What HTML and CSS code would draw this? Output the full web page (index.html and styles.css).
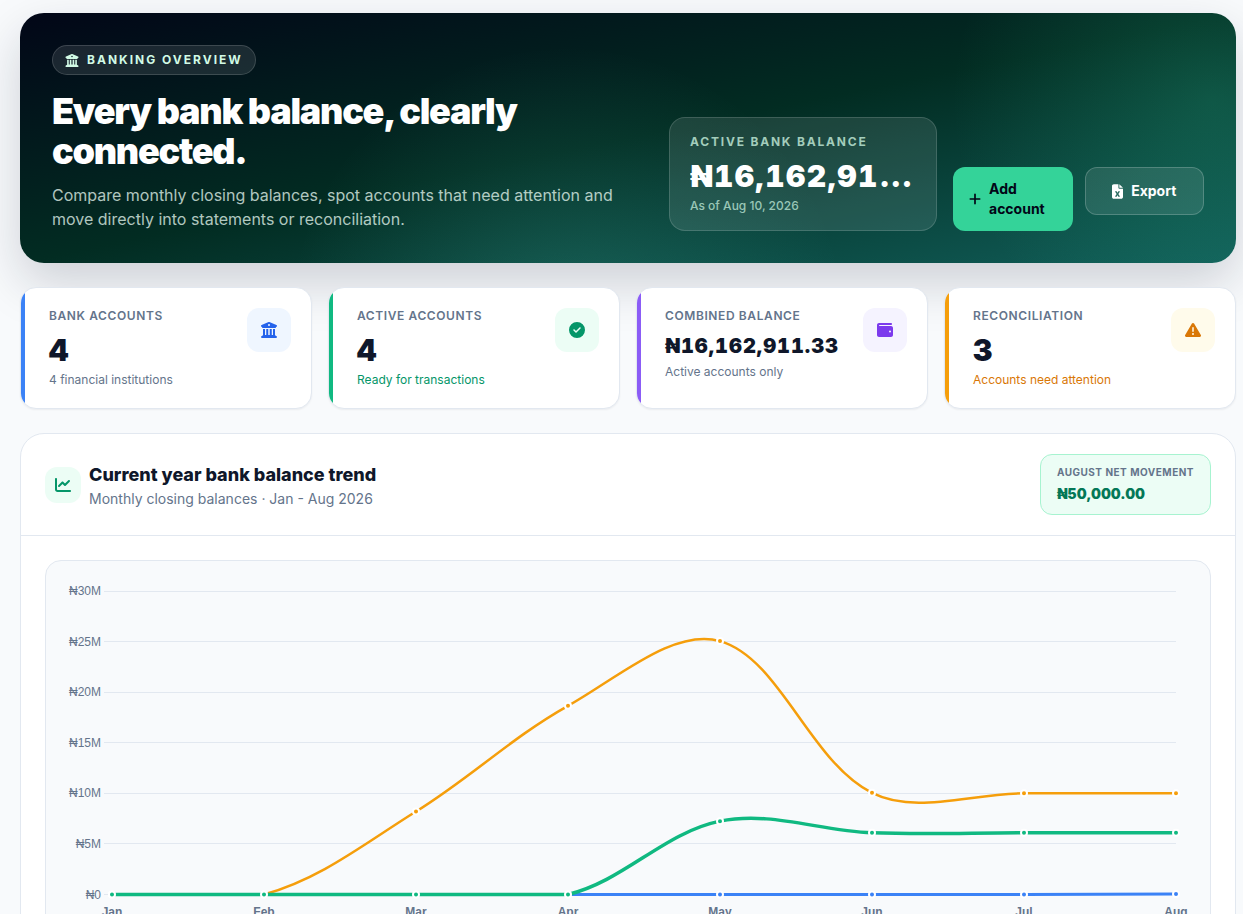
FILE: index.html
```html
<!DOCTYPE html>
<html lang="en">
<head>
    <meta charset="UTF-8">
    <meta name="viewport" content="width=device-width, initial-scale=1.0">
    <title>Banking overview</title>
    <link rel="stylesheet" href="styles.css">
</head>
<body>
    <!-- shared icons -->
    <svg class="sprite" aria-hidden="true">
        <symbol id="i-bank" viewBox="0 0 512 512"><path d="M243.4 2.6l-224 96c-14 6-21.8 21-18.7 35.8S16.8 160 32 160v8c0 13.3 10.7 24 24 24H456c13.3 0 24-10.7 24-24v-8c15.2 0 28.3-10.7 31.3-25.6s-4.8-29.9-18.7-35.8l-224-96c-8-3.4-17.2-3.4-25.2 0zM128 224H64V420.3c-.6 .3-1.2 .7-1.8 1.1l-48 32c-11.7 7.8-17 22.4-12.9 35.9S17.9 512 32 512H480c14.1 0 26.5-9.2 30.6-22.7s-1.1-28.1-12.9-35.9l-48-32c-.6-.4-1.2-.7-1.8-1.1V224H384V416H344V224H280V416H232V224H168V416H128V224zM256 64a32 32 0 1 1 0 64 32 32 0 1 1 0-64z"/></symbol>
        <symbol id="i-check" viewBox="0 0 512 512"><path d="M256 512A256 256 0 1 0 256 0a256 256 0 1 0 0 512zM369 209L241 337c-9.4 9.4-24.6 9.4-33.9 0l-64-64c-9.4-9.4-9.4-24.6 0-33.9s24.6-9.4 33.9 0l47 47L335 175c9.4-9.4 24.6-9.4 33.9 0s9.4 24.6 0 33.9z"/></symbol>
        <symbol id="i-wallet" viewBox="0 0 512 512"><path d="M64 32C28.7 32 0 60.7 0 96V416c0 35.3 28.7 64 64 64H448c35.3 0 64-28.7 64-64V192c0-35.3-28.7-64-64-64H80c-8.8 0-16-7.2-16-16s7.2-16 16-16H448c17.7 0 32-14.3 32-32s-14.3-32-32-32H64zM416 272a32 32 0 1 1 0 64 32 32 0 1 1 0-64z"/></symbol>
        <symbol id="i-warning" viewBox="0 0 512 512"><path d="M256 32c14.2 0 27.3 7.5 34.5 19.8l216 368c7.3 12.4 7.3 27.7 .2 40.1S486.3 480 472 480H40c-14.3 0-27.6-7.7-34.7-20.1s-7-27.8 .2-40.1l216-368C228.7 39.5 241.8 32 256 32zm0 128c-13.3 0-24 10.7-24 24V296c0 13.3 10.7 24 24 24s24-10.7 24-24V184c0-13.3-10.7-24-24-24zm32 224a32 32 0 1 0 -64 0 32 32 0 1 0 64 0z"/></symbol>
        <symbol id="i-chart" viewBox="0 0 512 512"><path d="M64 64c0-17.7-14.3-32-32-32S0 46.3 0 64V400c0 44.2 35.8 80 80 80H480c17.7 0 32-14.3 32-32s-14.3-32-32-32H80c-8.8 0-16-7.2-16-16V64zm406.6 86.6c12.5-12.5 12.5-32.8 0-45.3s-32.8-12.5-45.3 0L320 210.7l-57.4-57.4c-12.5-12.5-32.8-12.5-45.3 0l-112 112c-12.5 12.5-12.5 32.8 0 45.3s32.8 12.5 45.3 0L240 221.3l57.4 57.4c12.5 12.5 32.8 12.5 45.3 0l128-128z"/></symbol>
        <symbol id="i-plus" viewBox="0 0 448 512"><path d="M256 80c0-17.7-14.3-32-32-32s-32 14.3-32 32V224H48c-17.7 0-32 14.3-32 32s14.3 32 32 32H192V432c0 17.7 14.3 32 32 32s32-14.3 32-32V288H400c17.7 0 32-14.3 32-32s-14.3-32-32-32H256V80z"/></symbol>
        <symbol id="i-excel" viewBox="0 0 384 512"><path d="M64 0C28.7 0 0 28.7 0 64V448c0 35.3 28.7 64 64 64H320c35.3 0 64-28.7 64-64V160H256c-17.7 0-32-14.3-32-32V0H64zM256 0V128H384L256 0zM155.7 250.2L192 302.1l36.3-51.9c7.6-10.9 22.6-13.5 33.4-5.9s13.5 22.6 5.9 33.4L221.3 344l46.4 66.2c7.6 10.9 5 25.8-5.9 33.4s-25.8 5-33.4-5.9L192 385.8l-36.3 51.9c-7.6 10.9-22.6 13.5-33.4 5.9s-13.5-22.6-5.9-33.4L162.7 344l-46.4-66.2c-7.6-10.9-5-25.8 5.9-33.4s25.8-5 33.4 5.9z"/></symbol>
    </svg>

    <main class="page">
        <section class="hero">
            <div class="hero-text">
                <span class="pill"><svg class="pill-icon"><use href="#i-bank"/></svg>Banking overview</span>
                <h1>Every bank balance, clearly connected.</h1>
                <p>Compare monthly closing balances, spot accounts that need attention and move directly into statements or reconciliation.</p>
            </div>
            <div class="hero-side">
                <div class="balance">
                    <div class="balance-label">Active bank balance</div>
                    <div class="balance-value">₦16,162,911.33</div>
                    <div class="balance-date">As of Aug 10, 2026</div>
                </div>
                <div class="actions">
                    <button class="btn btn-primary" type="button"><svg class="btn-plus"><use href="#i-plus"/></svg><span>Add account</span></button>
                    <button class="btn btn-ghost" type="button"><svg class="btn-file"><use href="#i-excel"/></svg><span>Export</span></button>
                </div>
            </div>
        </section>

        <section class="stats">
            <article class="stat blue">
                <div>
                    <h2>Bank accounts</h2>
                    <div class="stat-value">4</div>
                    <p>4 financial institutions</p>
                </div>
                <span class="stat-icon"><svg><use href="#i-bank"/></svg></span>
            </article>
            <article class="stat green">
                <div>
                    <h2>Active accounts</h2>
                    <div class="stat-value">4</div>
                    <p class="note">Ready for transactions</p>
                </div>
                <span class="stat-icon"><svg><use href="#i-check"/></svg></span>
            </article>
            <article class="stat violet">
                <div>
                    <h2>Combined balance</h2>
                    <div class="stat-value money">₦16,162,911.33</div>
                    <p>Active accounts only</p>
                </div>
                <span class="stat-icon"><svg><use href="#i-wallet"/></svg></span>
            </article>
            <article class="stat amber">
                <div>
                    <h2>Reconciliation</h2>
                    <div class="stat-value">3</div>
                    <p class="note">Accounts need attention</p>
                </div>
                <span class="stat-icon"><svg><use href="#i-warning"/></svg></span>
            </article>
        </section>

        <section class="panel">
            <header class="panel-head">
                <span class="panel-icon"><svg><use href="#i-chart"/></svg></span>
                <div class="panel-title">
                    <h2>Current year bank balance trend</h2>
                    <p>Monthly closing balances · Jan - Aug 2026</p>
                </div>
                <div class="net">
                    <div class="net-label">August net movement</div>
                    <div class="net-value">₦50,000.00</div>
                </div>
            </header>
            <div class="panel-body">
                <div class="chart-box">
                    <svg id="chart" class="chart" role="img" aria-label="Monthly closing balances"></svg>
                </div>
            </div>
        </section>
    </main>
<script src="chart.js"></script>
</body>
</html>
```

FILE: styles.css
```css
* {
    box-sizing: border-box;
}
body {
    margin: 0;
    background: #f8fafc;
    color: #0f172a;
    font-family: Inter, "Liberation Sans", sans-serif;
    font-size: 14px;
    line-height: 20px;
    overflow-x: hidden;
}
body::-webkit-scrollbar {
    display: none;
}
h1, h2, p {
    margin: 0;
}
svg {
    fill: currentColor;
    display: block;
    flex: none;
}
.sprite {
    position: absolute;
    width: 0;
    height: 0;
}
.page {
    display: flex;
    flex-direction: column;
    gap: 24px;
    padding: 13px 7px 24px 20px;
}

/* hero */
.hero {
    display: flex;
    align-items: flex-end;
    gap: 32px;
    padding: 32px;
    border-radius: 24px;
    color: #fff;
    background:
        radial-gradient(circle at 98% 35%, rgba(52, 211, 153, .18), transparent 260px),
        radial-gradient(circle at 45% 125%, rgba(94, 234, 212, .16), transparent 280px),
        linear-gradient(to bottom right, #020617, #022c22 50%, #115e59);
    box-shadow: 0 20px 50px rgba(15, 23, 42, .18);
}
.hero-text {
    flex: 1;
    min-width: 0;
}
.pill {
    display: inline-flex;
    align-items: center;
    gap: 8px;
    padding: 6px 12px;
    border: 1px solid rgba(255, 255, 255, .15);
    border-radius: 999px;
    background: rgba(255, 255, 255, .1);
    color: #d1fae5;
    font-size: 12px;
    line-height: 16px;
    font-weight: 700;
    letter-spacing: 2px;
    text-transform: uppercase;
    vertical-align: top;
}
.pill-icon {
    width: 14px;
    height: 13px;
}
.hero h1 {
    margin-top: 16px;
    font-size: 36px;
    line-height: 40px;
    font-weight: 900;
    letter-spacing: -0.035em;
}
.hero p {
    margin-top: 12px;
    font-size: 16px;
    line-height: 24px;
    color: rgba(236, 253, 245, .75);
}
.hero-side {
    display: flex;
    align-items: flex-end;
    gap: 16px;
    width: 48%;
    max-width: 535px;
}
.balance {
    flex: 1;
    min-width: 0;
    padding: 16px 20px;
    border: 1px solid rgba(255, 255, 255, .15);
    border-radius: 16px;
    background: rgba(255, 255, 255, .1);
}
.balance-label {
    font-size: 12px;
    line-height: 16px;
    font-weight: 700;
    letter-spacing: 0.15em;
    text-transform: uppercase;
    color: rgba(209, 250, 229, .75);
}
.balance-value {
    margin: 8px 0 4px;
    font-size: 30px;
    line-height: 36px;
    font-weight: 900;
    font-variant-numeric: tabular-nums;
    letter-spacing: 0.05em;
    white-space: nowrap;
    overflow: hidden;
    text-overflow: ellipsis;
}
.balance-date {
    font-size: 12px;
    line-height: 16px;
    font-weight: 500;
    color: rgba(209, 250, 229, .7);
}
.actions {
    display: grid;
    grid-template-columns: 1fr 1fr;
    align-items: start;
    gap: 12px;
    width: 251px;
}
.btn {
    display: flex;
    align-items: center;
    justify-content: center;
    gap: 8px;
    min-height: 48px;
    padding: 12px 16px;
    border: 0;
    border-radius: 12px;
    font: inherit;
    font-weight: 700;
    text-align: left;
    cursor: pointer;
}
.btn-primary {
    background: #34d399;
    color: #020617;
}
.btn-ghost {
    border: 1px solid rgba(255, 255, 255, .2);
    background: rgba(255, 255, 255, .1);
    color: #fff;
}
.btn-plus {
    width: 12px;
    height: 14px;
}
.btn-file {
    width: 11px;
    height: 15px;
}

/* stat cards */
.stats {
    display: grid;
    grid-template-columns: repeat(4, 1fr);
    gap: 16px;
}
.stat {
    position: relative;
    display: flex;
    justify-content: space-between;
    padding: 20px 20px 20px 28px;
    border: 1px solid #e2e8f0;
    border-radius: 16px;
    background: #fff;
    overflow: hidden;
    box-shadow: 0 1px 2px rgba(15, 23, 42, .06);
}
.stat::before {
    content: "";
    position: absolute;
    left: 0;
    top: 0;
    bottom: 0;
    width: 4px;
    background: var(--bar);
}
.stat h2 {
    font-size: 12px;
    line-height: 16px;
    font-weight: 600;
    letter-spacing: 0.05em;
    text-transform: uppercase;
    color: #64748b;
}
.stat-value {
    margin: 8px 0 4px;
    font-size: 30px;
    line-height: 36px;
    font-weight: 900;
    font-variant-numeric: tabular-nums;
    letter-spacing: 0.05em;
}
.stat-value.money {
    font-size: 20px;
    line-height: 28px;
}
.stat p {
    font-size: 12px;
    line-height: 16px;
    color: #64748b;
}
.stat .note {
    color: var(--ink);
}
.stat-icon {
    display: flex;
    align-items: center;
    justify-content: center;
    flex: none;
    width: 44px;
    height: 44px;
    border-radius: 12px;
    background: var(--tint);
    color: var(--ink);
}
.stat-icon svg {
    width: 16px;
    height: 16px;
}
.blue {
    --bar: #3b82f6;
    --tint: #eff6ff;
    --ink: #2563eb;
}
.green {
    --bar: #10b981;
    --tint: #ecfdf5;
    --ink: #059669;
}
.violet {
    --bar: #8b5cf6;
    --tint: #f5f3ff;
    --ink: #7c3aed;
}
.amber {
    --bar: #f59e0b;
    --tint: #fffbeb;
    --ink: #d97706;
}

/* trend panel */
.panel {
    border: 1px solid #e2e8f0;
    border-radius: 24px;
    background: #fff;
}
.panel-head {
    display: flex;
    align-items: center;
    gap: 8px;
    padding: 20px 24px;
    border-bottom: 1px solid #e2e8f0;
}
.panel-icon {
    display: flex;
    align-items: center;
    justify-content: center;
    width: 36px;
    height: 36px;
    border-radius: 12px;
    background: #ecfdf5;
    color: #059669;
}
.panel-icon svg {
    width: 16px;
    height: 16px;
}
.panel-title {
    flex: 1;
}
.panel-title h2 {
    font-size: 18px;
    line-height: 28px;
    font-weight: 800;
}
.panel-title p {
    color: #64748b;
}
.net {
    padding: 10px 16px;
    border: 1px solid #a7f3d0;
    border-radius: 12px;
    background: #ecfdf5;
}
.net-label {
    font-size: 10px;
    line-height: 15px;
    font-weight: 700;
    letter-spacing: 0.05em;
    text-transform: uppercase;
    color: #64748b;
}
.net-value {
    margin-top: 4px;
    font-weight: 900;
    color: #047857;
}
.panel-body {
    padding: 24px;
}
.chart-box {
    padding: 16px 23px;
    border: 1px solid #e2e8f0;
    border-radius: 16px;
    background: #f8fafc;
}
.chart {
    width: 100%;
    height: 360px;
    overflow: visible;
}
.chart text {
    font: 12px "Liberation Sans", Arial, sans-serif;
    fill: #64748b;
}
.chart .month {
    font-weight: 700;
    text-anchor: middle;
}
.chart .amount {
    text-anchor: end;
}
.chart .grid {
    stroke: #e2e8f0;
}
.chart .line {
    fill: none;
}
.chart .dot {
    stroke: #fff;
    stroke-width: 2;
}
```

FILE: chart.js
```js
var months = ['Jan', 'Feb', 'Mar', 'Apr', 'May', 'Jun', 'Jul', 'Aug'];
// drawn in this order, the last one lies on top
var series = [
    { color: '#3b82f6', width: 3, data: [0, 0, 0, 0, 0, 0, 0, 0.06] },
    { color: '#f59e0b', width: 2.5, data: [0, 0, 8.2, 18.65, 25.05, 10.05, 10, 10] },
    { color: '#10b981', width: 3.5, data: [0, 0, 0, 0, 7.25, 6.1, 6.1, 6.1] }
];
var max = 30, step = 5, tension = 0.35;
var svg = document.getElementById('chart');

function add(name, attrs, text) {
    var el = document.createElementNS('http://www.w3.org/2000/svg', name);
    for (var k in attrs) el.setAttribute(k, attrs[k]);
    if (text) el.textContent = text;
    svg.appendChild(el);
}

// control points on both sides of every point, kept inside the plot
function curve(pts, top, bottom) {
    function clamp(y) { return Math.min(bottom, Math.max(top, y)); }
    var ctrl = pts.map(function (p, i) {
        var a = pts[i - 1] || p, b = pts[i + 1] || p;
        var d1 = Math.hypot(p.x - a.x, p.y - a.y);
        var d2 = Math.hypot(b.x - p.x, b.y - p.y);
        var f1 = tension * d1 / (d1 + d2), f2 = tension * d2 / (d1 + d2);
        return [
            p.x - f1 * (b.x - a.x), clamp(p.y - f1 * (b.y - a.y)),
            p.x + f2 * (b.x - a.x), clamp(p.y + f2 * (b.y - a.y))
        ];
    });
    var d = 'M' + pts[0].x + ' ' + pts[0].y;
    for (var i = 1; i < pts.length; i++) {
        d += 'C' + [ctrl[i - 1][2], ctrl[i - 1][3], ctrl[i][0], ctrl[i][1], pts[i].x, pts[i].y].join(' ');
    }
    return d;
}

function draw() {
    svg.textContent = '';
    var left = 43, right = svg.clientWidth - 11, top = 14, bottom = 317.5;
    function px(i) { return left + (right - left) * i / (months.length - 1); }
    function py(v) { return bottom - (bottom - top) * v / max; }

    for (var v = 0; v <= max; v += step) {
        var y = Math.floor(py(v)) + 0.5;
        add('line', { x1: left - 8, x2: right, y1: y, y2: y, 'class': 'grid' });
        add('text', { x: left - 11, y: Math.round(py(v)) + 4, 'class': 'amount' }, '₦' + v + (v ? 'M' : ''));
    }
    months.forEach(function (m, i) {
        add('text', { x: px(i), y: bottom + 21, 'class': 'month' }, m);
    });
    series.forEach(function (s) {
        var pts = s.data.map(function (v, i) { return { x: px(i), y: py(v) }; });
        add('path', { d: curve(pts, top, bottom), stroke: s.color, 'stroke-width': s.width, 'class': 'line' });
        pts.forEach(function (p) {
            add('circle', { cx: p.x, cy: p.y, r: 3, fill: s.color, 'class': 'dot' });
        });
    });
}

draw();
window.onresize = draw;
```
